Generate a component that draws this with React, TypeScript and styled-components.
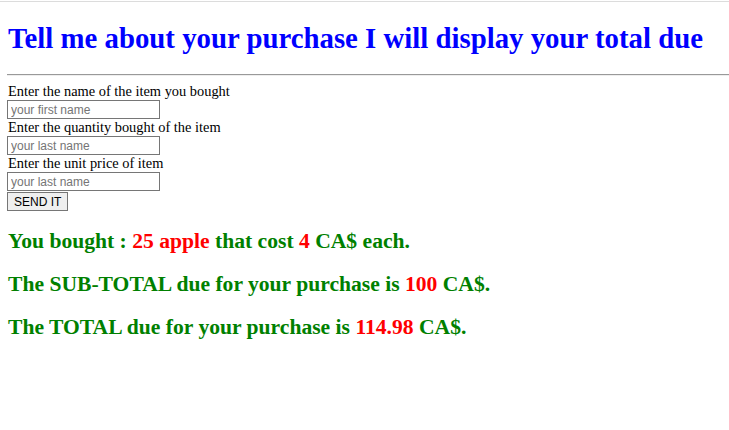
import React from "react";
import styled, { createGlobalStyle } from "styled-components";

const Global = createGlobalStyle`
  html, body { margin: 0; padding: 0; background: #fff; }
  body { font-family: "Liberation Serif", "Times New Roman", serif; font-size: 14.4px; color: #000; }
`;

const TopRule = styled.div`
  height: 1px;
  margin-top: 1px;
  background: #dcdcdc;
`;

const Page = styled.div`
  padding: 0 0 8px 7px;
`;

const Title = styled.h1`
  color: blue;
  font-size: 28.8px;
  font-weight: bold;
  margin: 20px 0 19px 1px;
  line-height: 33px;
  white-space: nowrap;
`;

const Rule = styled.hr`
  margin: 0;
  border: none;
  border-top: 1px solid #999;
  border-bottom: 1px solid #eee;
  height: 0;
`;

const Form = styled.form`
  display: flex;
  flex-direction: column;
  align-items: flex-start;
  margin-top: 7px;
`;

const Label = styled.label`
  font-size: 14.4px;
  line-height: 17px;
  padding-left: 1px;
`;

const Input = styled.input`
  font-family: "Liberation Sans", Arial, sans-serif;
  font-size: 12px;
  width: 153px;
  height: 19px;
  box-sizing: border-box;
  border: 1px solid #767676;
  padding: 1px 3px;
  margin: 0;
  &::placeholder { color: #757575; }
`;

const Button = styled.button`
  font-family: "Liberation Sans", Arial, sans-serif;
  font-size: 12px;
  height: 19px;
  padding: 0 6px;
  margin-top: 1px;
  border: 1px solid #767676;
  background: #efefef;
  border-radius: 0;
  color: #000;
`;

const Result = styled.h2`
  color: green;
  font-size: 21.6px;
  font-weight: bold;
  line-height: 25px;
  margin: 18px 0 0 1px;
`;

const Hi = styled.span`
  color: red;
`;

export default function App() {
  return (
    <>
      <Global />
      <TopRule />
      <Page>
        <Title>Tell me about your purchase I will display your total due</Title>
        <Rule />
        <Form onSubmit={(e) => e.preventDefault()}>
          <Label>Enter the name of the item you bought</Label>
          <Input placeholder="your first name" />
          <Label>Enter the quantity bought of the item</Label>
          <Input placeholder="your last name" />
          <Label>Enter the unit price of item</Label>
          <Input placeholder="your last name" />
          <Button type="submit">SEND IT</Button>
        </Form>
        <Result>
          You bought : <Hi>25 apple</Hi> that cost <Hi>4</Hi> CA$ each.
        </Result>
        <Result>
          The SUB-TOTAL due for your purchase is <Hi>100</Hi> CA$.
        </Result>
        <Result>
          The TOTAL due for your purchase is <Hi>114.98</Hi> CA$.
        </Result>
      </Page>
    </>
  );
}
